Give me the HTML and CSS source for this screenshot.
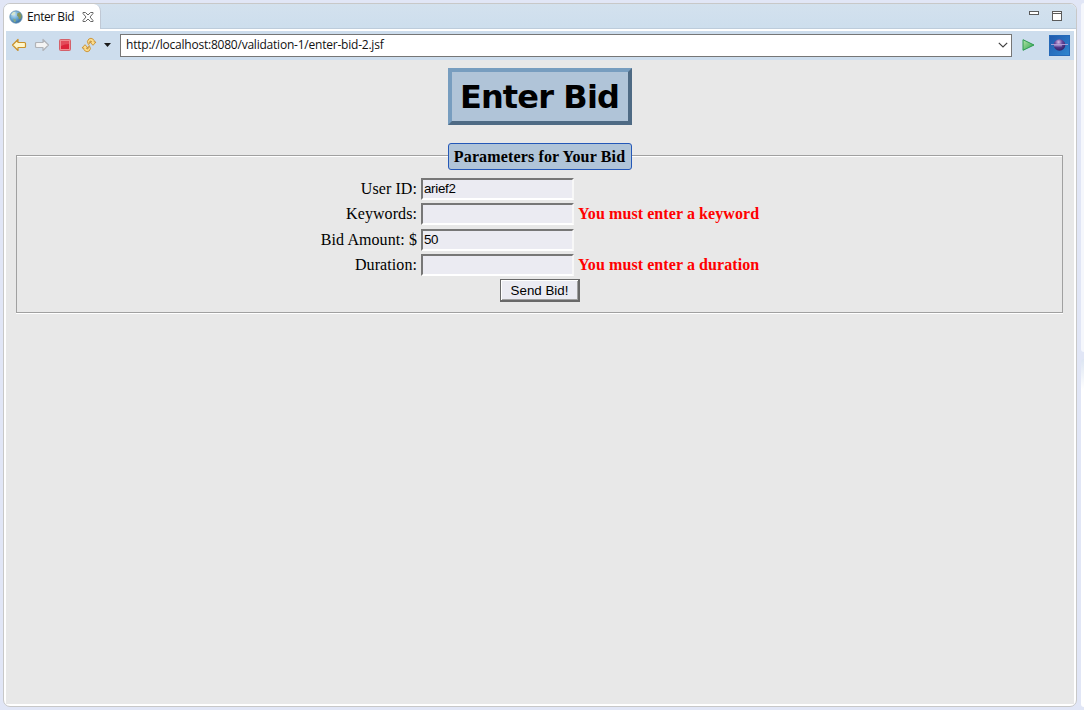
FILE: index.html
```html
<!DOCTYPE html>
<html lang="en">
<head>
<meta charset="utf-8">
<title>Enter Bid</title>
<link rel="stylesheet" href="styles.css">
</head>
<body>
<div class="workbench">
  <div class="editor">
    <div class="tabbar">
      <div class="tab">
        <svg class="globe" width="14" height="14" viewBox="0 0 14 14">
          <defs><radialGradient id="sea" cx=".35" cy=".3" r=".8"><stop offset="0" stop-color="#c9e5f6"/><stop offset=".5" stop-color="#66a5d2"/><stop offset="1" stop-color="#2c6096"/></radialGradient></defs>
          <circle cx="7" cy="7" r="6.2" fill="url(#sea)" stroke="#6590b0" stroke-width=".8"/>
          <path d="M2 4.500L4 2.200 6.500 1.800 6 4 4 5.500z" fill="#d5e6d0"/>
          <path d="M8.500 3l2.500-.5 1.700 3L12 8.500 9.800 9.300 9.500 7 8 5.500z" fill="#84955f"/>
          <path d="M4 8.500l3 1-.5 2.500L5 12z" fill="#86ab86"/>
        </svg>
        <span class="tab-title">Enter Bid</span>
        <svg class="close" width="12" height="12" viewBox="0 0 12 12"><path d="M1 1.500h2.500L6 4l2.500-2.500H11v1L8 6l3 3.500v1H8.500L6 8l-2.500 2.500H1v-1L4 6 1 2.500z" fill="#fff" stroke="#666" stroke-width="1"/></svg>
      </div>
      <div class="window-controls">
        <span class="minimize"></span>
        <span class="maximize"></span>
      </div>
    </div>
    <div class="toolbar">
      <svg class="back" width="16" height="14" viewBox="0 0 16 14"><path d="M1.500 7L7 1.500V4.500h6.500q1 0 1 1v3q0 1-1 1H7v3z" fill="#fff5c8" stroke="#c9912a" stroke-width="1.200" stroke-linejoin="round"/></svg>
      <svg class="forward" width="16" height="14" viewBox="0 0 16 14"><path d="M14.500 7L9 1.500V4.500H2.500q-1 0-1 1v3q0 1 1 1H9v3z" fill="#f4f4f4" stroke="#b0b3b8" stroke-width="1.200" stroke-linejoin="round"/></svg>
      <svg class="stop" width="12" height="12" viewBox="0 0 12 12"><rect x=".5" y=".5" width="11" height="11" rx="1" fill="#f08c90" stroke="#d4616a"/><rect x="2" y="2" width="8" height="8" fill="#dc2338"/><path d="M2 2h8v3q-4 0-8 2z" fill="#e34b59"/></svg>
      <svg class="refresh" width="16" height="16" viewBox="0 0 16 16" fill="#fbdc8c" stroke="#c88f32" stroke-width=".9" stroke-linejoin="round">
        <path d="M7.300 7.500Q5.300 4 7.800 2Q10 .3 12.300 2.300Q13.500 3.500 13.300 5H15L12 8.300 9 5h1.700Q10.300 3.600 9 4.200 8 5 8.600 6.600z"/>
        <path d="M8.300 8.500Q10.700 12 8.200 14Q6 15.700 3.700 13.700 2.500 12.500 2.700 11H1L4 7.700 7 11H5.300Q5.700 12.400 7 11.800 8 11 7.400 9.400z"/>
      </svg>
      <svg class="menu-arrow" width="7" height="4" viewBox="0 0 7 4"><path d="M0 0h7L3.500 4z" fill="#1b1b1b"/></svg>
      <div class="address">
        <span class="url">http://localhost:8080/validation-1/enter-bid-2.jsf</span>
        <svg width="10" height="6" viewBox="0 0 10 6"><path d="M.8.800L5 5 9.200.800" fill="none" stroke="#444" stroke-width="1.200"/></svg>
      </div>
      <svg class="go" width="13" height="12" viewBox="0 0 13 12"><defs><linearGradient id="leaf" x2="1" y2="1"><stop offset="0" stop-color="#b5e6a8"/><stop offset="1" stop-color="#27a04a"/></linearGradient></defs><path d="M1 .7L12 6 1 11.300z" fill="url(#leaf)" stroke="#2c9a50" stroke-linejoin="round"/></svg>
      <svg class="eclipse" width="21" height="21" viewBox="0 0 21 21">
        <defs><linearGradient id="sky" y2="1"><stop offset="0" stop-color="#2058ac"/><stop offset="1" stop-color="#2f87d0"/></linearGradient><radialGradient id="orb" cx=".42" cy=".25" r=".8"><stop offset="0" stop-color="#d8bce8"/><stop offset=".4" stop-color="#65469a"/><stop offset="1" stop-color="#2b1a60"/></radialGradient></defs>
        <rect x=".5" y=".5" width="20" height="20" fill="url(#sky)" stroke="#2569b8"/>
        <circle cx="10.500" cy="10" r="5.800" fill="url(#orb)"/>
        <path d="M2 9.500h17M5 10.800h8" stroke="#b6a3d8" stroke-width=".9"/>
      </svg>
    </div>
    <main class="page">
      <h1 class="title">Enter Bid</h1>
      <form class="bid-form">
        <fieldset class="parameters">
          <legend class="legend">Parameters for Your Bid</legend>
          <div class="row"><label for="user">User ID:</label><input id="user" type="text" value="arief2"></div>
          <div class="row"><label for="keywords">Keywords:</label><input id="keywords" type="text"><span class="error">You must enter a keyword</span></div>
          <div class="row"><label for="amount">Bid Amount: $</label><input id="amount" type="text" value="50"></div>
          <div class="row"><label for="duration">Duration:</label><input id="duration" type="text"><span class="error">You must enter a duration</span></div>
          <button class="send" type="button">Send Bid!</button>
        </fieldset>
      </form>
    </main>
  </div>
  <div class="neighbours"><div class="upper"></div><div class="lower"></div></div>
</div>
</body>
</html>
```
FILE: styles.css
```css
* { box-sizing: border-box; }
body { margin: 0; background: #e1e6f6; overflow: hidden; }
svg { display: block; flex: none; }
.workbench { display: flex; gap: 4px; width: 1084px; height: 710px; padding: 3px 0 3px 3px; }
.editor { width: 1074px; height: 704px; border: 1px solid #c8c8c8; border-radius: 7px; background: #fff; overflow: hidden; display: flex; flex-direction: column; padding: 0 2px 2px; }
.tabbar { height: 25px; flex: none; display: flex; justify-content: space-between; margin: 0 -2px; background: linear-gradient(#d3e1ee, #cddeed); border-bottom: 1px solid #bdccdb; }
.tab { height: 25px; width: 97px; display: flex; align-items: center; background: #fff; border-right: 1px solid #c0c8d4; border-radius: 0 7px 0 0; padding-left: 5px; font: 12px "Open Sans", sans-serif; color: #111; }
.tab-title { width: 48px; margin-left: 4px; letter-spacing: -.45px; white-space: nowrap; }
.close { margin-left: 7px; }
.window-controls { display: flex; gap: 13px; padding: 7px 14px 0 0; }
.minimize { width: 10px; height: 4px; border: 1px solid #5b5b5b; background: #fff; }
.maximize { width: 10px; height: 10px; border: 1px solid #5b5b5b; background: linear-gradient(#fff 1px, #5b5b5b 1px, #5b5b5b 2px, #fff 2px); }
.toolbar { height: 29px; flex: none; margin-top: 2px; display: flex; align-items: center; background: #cddded; padding: 0 0 1px 5px; }
.forward { margin-left: 7px; }
.stop { margin-left: 9px; }
.refresh { margin-left: 10px; }
.menu-arrow { margin-left: 7px; }
.address { width: 892px; height: 23px; margin-left: 9px; display: flex; align-items: center; justify-content: space-between; border: 1px solid #767676; background: #fff; padding: 0 3px 0 5px; font: 12px "Open Sans", sans-serif; color: #111; }
.url { letter-spacing: -.22px; margin-top: -1px; }
.go { margin-left: 10px; }
.eclipse { margin-left: 14px; }
.page { flex: 1; background: #e8e8e8; padding: 8px 11px 0 10px; font: 16px/18px "Liberation Serif", serif; letter-spacing: .08px; color: #000; }
.title { width: 184px; height: 57px; margin: 0 auto; border: 4px solid; border-color: #779dbf #4e6a84 #4e6a84 #779dbf; background: #b0c4d8; font: bold 32px/51px "DejaVu Sans", sans-serif; letter-spacing: -.85px; text-align: center; white-space: nowrap; }
.bid-form { padding-top: 17px; }
.parameters { height: 171px; margin: 0; padding: 7px 0 0; border: 1px solid #a0a0a0; box-shadow: inset 0 1px #fff, 0 1px #fff; min-width: 0; }
.legend { position: relative; top: 1px; width: 184px; height: 27px; margin: 0 auto; padding: 0; border: 1px solid #2458b8; border-radius: 3px; background: #b0c4d8; font-weight: bold; line-height: 26px; letter-spacing: .14px; text-align: center; white-space: nowrap; }
.row { display: grid; grid-template-columns: 400px 153px auto; column-gap: 4px; align-items: center; height: 25.5px; }
.row label { text-align: right; }
.row input { width: 153px; height: 22px; padding: 0 1px 1px; border: 2px solid; border-color: #777 #f7f7f7 #fff #777; background: #ebebf2; font: 13.33px "Liberation Sans", sans-serif; letter-spacing: -.3px; color: #000; }
.error { color: #f00; font-weight: bold; white-space: nowrap; }
.send { display: block; width: 80px; height: 23px; margin: 1px auto 0; padding: 1px 0 0 1px; border: 1px solid #696969; border-right-width: 2px; border-bottom-width: 2px; box-shadow: inset 1px 1px #fff, inset -1px -1px #a0a0a0; background: #ebebf2; font: 13.33px "Liberation Sans", sans-serif; color: #000; }
.neighbours { width: 3px; display: flex; flex-direction: column; gap: 7px; }
.upper { height: 349px; background: #f5f7fc; border-radius: 4px 0 0 4px; }
.lower { flex: 1; background: linear-gradient(#dce5f2, #fff 30px); border-radius: 4px 0 0 4px; }
```
